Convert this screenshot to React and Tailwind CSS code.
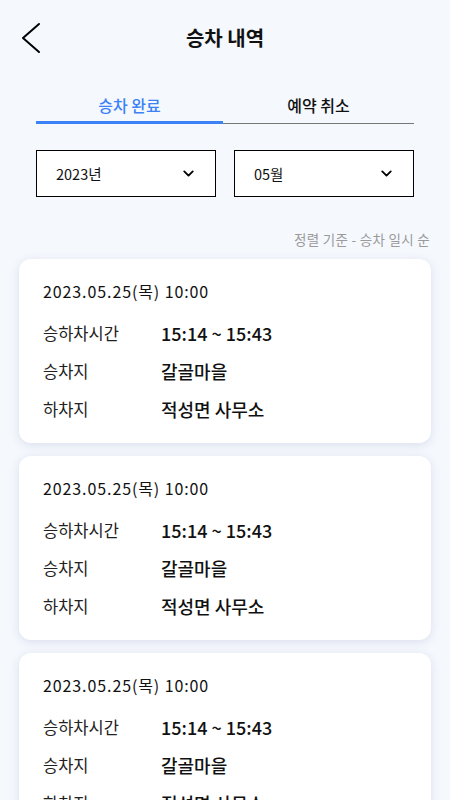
import { ChevronDown } from 'lucide-react'

const rides = [1, 2, 3].map((id) => ({
  id,
  date: '2023.05.25(목) 10:00',
  time: '15:14 ~ 15:43',
  from: '갈골마을',
  to: '적성면 사무소',
}))

function Select({ value }) {
  return (
    <div className="flex-1 h-[47px] bg-white border border-black flex items-center justify-between pl-[19px] pr-[18px]">
      <span className="text-[14.5px] text-[#111]">{value}</span>
      <ChevronDown className="w-[17px] h-[17px] text-black" strokeWidth={2.6} />
    </div>
  )
}

function Row({ label, value }) {
  return (
    <div className="flex items-center h-[22px]">
      <span className="w-[118px] shrink-0 text-[16.5px] text-[#222]">{label}</span>
      <span className="text-[18px] font-medium text-[#111]">{value}</span>
    </div>
  )
}

function RideCard({ ride }) {
  return (
    <div className="bg-white rounded-[12px] shadow-[0_2px_10px_rgba(100,110,160,0.18)] px-6 pt-[21px] pb-[23px]">
      <p className="text-[16px] leading-[22px] tracking-[0.9px] text-[#111]">{ride.date}</p>
      <div className="mt-[20px] flex flex-col gap-[16px]">
        <Row label="승하차시간" value={ride.time} />
        <Row label="승차지" value={ride.from} />
        <Row label="하차지" value={ride.to} />
      </div>
    </div>
  )
}

export default function App() {
  return (
    <div
      className="w-[450px] h-[800px] overflow-hidden bg-[#f5f8fd]"
      style={{ fontFamily: '"Noto Sans CJK KR", "Noto Sans", sans-serif' }}
    >
      {/* Header */}
      <div className="relative h-[76px] flex items-center justify-center">
        <svg className="absolute left-[20px] top-[22px]" width="22" height="32" viewBox="0 0 22 32" fill="none">
          <polyline points="19,2 3,16 19,30" stroke="#000" strokeWidth="2" strokeLinecap="round" strokeLinejoin="round" />
        </svg>
        <h1 className="text-[20px] font-semibold text-[#111]">승차 내역</h1>
      </div>

      {/* Tabs */}
      <div className="mx-9 mt-[15px] flex">
        <div className="w-[187px] flex flex-col items-center">
          <span className="text-[16px] font-medium text-[#3b82f6] h-[28px] leading-[28px]">승차 완료</span>
          <div className="w-full h-[3px] mt-[2px] bg-[#3b82f6]" />
        </div>
        <div className="flex-1 flex flex-col items-center">
          <span className="text-[16px] font-medium text-[#111] h-[28px] leading-[28px]">예약 취소</span>
          <div className="w-full h-[3px] mt-[2px] flex items-end">
            <div className="w-full h-[1.5px] bg-[#777]" />
          </div>
        </div>
      </div>

      {/* Filters */}
      <div className="mx-9 mt-[26px] flex gap-[18px]">
        <Select value="2023년" />
        <Select value="05월" />
      </div>

      <p className="mt-[32px] pr-5 text-right text-[13.5px] tracking-[0.3px] text-[#9a9a9a]">정렬 기준 - 승차 일시 순</p>

      {/* Ride list */}
      <div className="mx-[19px] mt-[10px] flex flex-col gap-[13px]">
        {rides.map((ride) => (
          <RideCard key={ride.id} ride={ride} />
        ))}
      </div>
    </div>
  )
}
